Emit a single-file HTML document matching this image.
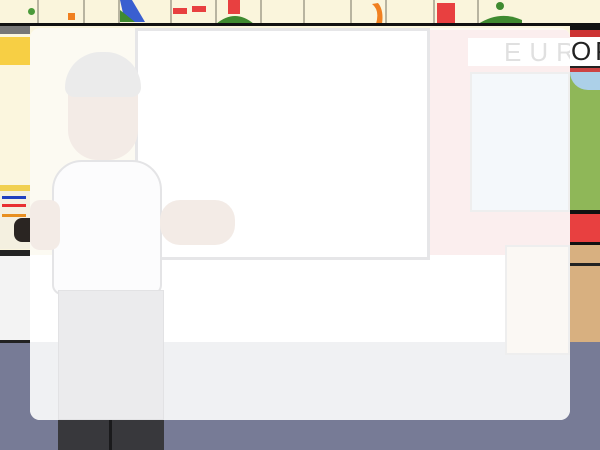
<!DOCTYPE html>
<html><head><meta charset="utf-8"><style>
*{margin:0;padding:0;box-sizing:border-box}
body{width:600px;height:450px;overflow:hidden;position:relative;background:#fbf6de;font-family:"Liberation Sans",sans-serif}
.a{position:absolute}
</style></head><body>
<!-- frieze -->
<div class="a" style="left:0;top:0;width:600px;height:24px;background:#faf5dc"></div>
<div class="a" style="left:37px;top:0;width:2px;height:24px;background:#b8b4a0"></div>
<div class="a" style="left:83px;top:0;width:2px;height:24px;background:#b8b4a0"></div>
<div class="a" style="left:118px;top:0;width:2px;height:24px;background:#b8b4a0"></div>
<div class="a" style="left:170px;top:0;width:2px;height:24px;background:#b8b4a0"></div>
<div class="a" style="left:215px;top:0;width:2px;height:24px;background:#b8b4a0"></div>
<div class="a" style="left:260px;top:0;width:2px;height:24px;background:#b8b4a0"></div>
<div class="a" style="left:303px;top:0;width:2px;height:24px;background:#b8b4a0"></div>
<div class="a" style="left:350px;top:0;width:2px;height:24px;background:#b8b4a0"></div>
<div class="a" style="left:385px;top:0;width:2px;height:24px;background:#b8b4a0"></div>
<div class="a" style="left:433px;top:0;width:2px;height:24px;background:#b8b4a0"></div>
<div class="a" style="left:477px;top:0;width:2px;height:24px;background:#b8b4a0"></div>
<div class="a" style="left:28px;top:8px;width:7px;height:7px;border-radius:50%;background:#4a9a3a"></div>
<div class="a" style="left:68px;top:13px;width:7px;height:7px;background:#f08020"></div>
<svg class="a" style="left:0;top:0" width="600" height="24">
<path d="M120 0 L132 0 L145 22 L125 22Z" fill="#3a5fd0"/>
<path d="M120 10 L135 22 L120 22Z" fill="#3f8a30"/>
<rect x="173" y="8" width="14" height="6" fill="#e84040"/><rect x="192" y="6" width="14" height="6" fill="#e84040"/>
<path d="M216 24 Q235 8 254 24Z" fill="#3f8a30"/><rect x="228" y="0" width="12" height="14" fill="#e84040"/>
<path d="M372 4 Q380 10 376 24 L382 24 Q384 10 378 3Z" fill="#f08020"/>
<rect x="437" y="3" width="18" height="21" fill="#e84040"/>
<path d="M478 24 Q500 10 522 20 L522 24Z" fill="#3f8a30"/><circle cx="500" cy="6" r="4" fill="#3f8a30"/>
</svg>
<div class="a" style="left:0;top:23px;width:600px;height:3px;background:#111"></div>
<!-- left wall -->
<div class="a" style="left:0;top:26px;width:30px;height:8px;background:#777"></div>
<div class="a" style="left:0;top:37px;width:30px;height:28px;background:#f7cf44"></div>
<div class="a" style="left:0;top:185px;width:30px;height:6px;background:#f1d050"></div>
<div class="a" style="left:0;top:191px;width:30px;height:58px;background:#f4f0e0"></div>
<div class="a" style="left:2px;top:196px;width:24px;height:3px;background:#2040c0"></div>
<div class="a" style="left:2px;top:204px;width:24px;height:3px;background:#e83030"></div>
<div class="a" style="left:2px;top:214px;width:24px;height:3px;background:#e89020"></div>
<div class="a" style="left:14px;top:218px;width:16px;height:24px;background:#2a2522;border-radius:8px 0 0 8px"></div>
<div class="a" style="left:0;top:250px;width:30px;height:6px;background:#222"></div>
<div class="a" style="left:0;top:256px;width:30px;height:86px;background:#f3f3f3"></div>
<!-- right wall -->
<div class="a" style="left:570px;top:26px;width:30px;height:4px;background:#111"></div>
<div class="a" style="left:570px;top:30px;width:30px;height:7px;background:#c33"></div>
<div class="a" style="left:570px;top:37px;width:30px;height:29px;background:#fff;font-size:26px;color:#222;line-height:29px;letter-spacing:4px;padding-left:1px;overflow:hidden;white-space:nowrap">OP</div>
<div class="a" style="left:570px;top:66px;width:30px;height:6px;background:#c44;border-top:2px solid #222"></div>
<div class="a" style="left:570px;top:72px;width:30px;height:138px;background:#8fb758"></div>
<div class="a" style="left:570px;top:72px;width:30px;height:18px;background:#acd0e8;border-radius:0 0 0 20px"></div>
<div class="a" style="left:570px;top:210px;width:30px;height:4px;background:#111"></div>
<div class="a" style="left:570px;top:214px;width:30px;height:28px;background:#e84040"></div>
<div class="a" style="left:570px;top:242px;width:30px;height:3px;background:#111"></div>
<div class="a" style="left:570px;top:245px;width:30px;height:100px;background:#d8b080"></div>
<div class="a" style="left:570px;top:263px;width:30px;height:3px;background:#222"></div>
<div class="a" style="left:570px;top:345px;width:30px;height:3px;background:#555"></div>
<!-- floor -->
<div class="a" style="left:0;top:342px;width:600px;height:108px;background:#777b96"></div>
<div class="a" style="left:0;top:340px;width:30px;height:3px;background:#222"></div>
<div class="a" style="left:58px;top:420px;width:106px;height:30px;background:#38383c"></div>
<div class="a" style="left:109px;top:420px;width:3px;height:30px;background:#1a1a1c"></div>
<!-- panel (washed scene) -->
<div class="a" style="left:30px;top:28px;width:540px;height:392px;border-radius:10px;overflow:hidden;background:#fcfaf2">
  <div class="a" style="left:0;top:314px;width:540px;height:78px;background:#f0f1f3"></div>
  <div class="a" style="left:0;top:227px;width:480px;height:87px;background:#fff"></div>
  <div class="a" style="left:105px;top:0;width:295px;height:232px;background:#fff;border:3px solid #e6e6e8"></div>
  <div class="a" style="left:400px;top:2px;width:140px;height:225px;background:#fbeeee"></div>
  <div class="a" style="left:438px;top:10px;width:102px;height:28px;background:#fff;font-size:26px;color:#e0e0e0;letter-spacing:8px;line-height:28px;padding-left:36px">EUR</div>
  <div class="a" style="left:440px;top:44px;width:100px;height:140px;background:#f4f8fb;border:2px solid #eee"></div>
  <div class="a" style="left:475px;top:217px;width:65px;height:110px;background:#fbf8f4;border:2px solid #eee"></div>
  <!-- man -->
  <div class="a" style="left:38px;top:32px;width:70px;height:100px;border-radius:35px 35px 30px 30px;background:#f3ebe6"></div>
  <div class="a" style="left:35px;top:24px;width:76px;height:45px;border-radius:38px 38px 10px 10px;background:#ebebeb"></div>
  <div class="a" style="left:22px;top:132px;width:110px;height:135px;border-radius:30px 30px 10px 10px;background:#fcfcfd;border:2px solid #e4e4e6"></div>
  <div class="a" style="left:0;top:172px;width:30px;height:50px;background:#f3ebe6;border-radius:10px"></div>
  <div class="a" style="left:130px;top:172px;width:75px;height:45px;background:#f3ebe6;border-radius:20px"></div>
  <div class="a" style="left:28px;top:262px;width:106px;height:130px;background:#ebebed;border:1px solid #e2e2e4"></div>
</div>
</body></html>
